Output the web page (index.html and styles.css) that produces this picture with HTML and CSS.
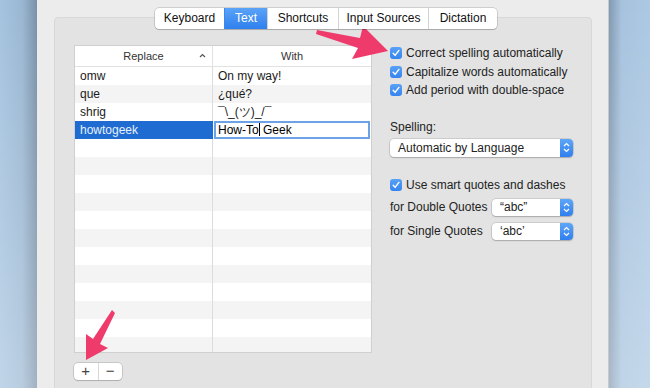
FILE: index.html
```html
<!DOCTYPE html>
<html lang="en">
<head>
    <meta charset="UTF-8">
    <meta name="viewport" content="width=device-width, initial-scale=1.0">
    <title>Keyboard - Text</title>
    <link rel="stylesheet" href="styles.css">
</head>
<body>
    <div class="screen">
        <div class="desk desk-left"></div>

        <div class="window">
            <!-- segmented tabs -->
            <div class="tabs">
                <div class="tab tab-keyboard">Keyboard</div>
                <div class="tab tab-text active">Text</div>
                <div class="tab tab-shortcuts">Shortcuts</div>
                <div class="tab tab-input">Input Sources</div>
                <div class="tab tab-dictation">Dictation</div>
            </div>

            <div class="group">
                <!-- replacement table -->
                <div class="left-col">
                    <div class="table">
                        <div class="thead">
                            <div class="th th-replace">Replace
                                <svg class="caret" width="7" height="5" viewBox="0 0 7 5"><path d="M1 4 L3.5 1.5 L6 4" fill="none" stroke="#555" stroke-width="1.2"/></svg>
                            </div>
                            <div class="th">With</div>
                        </div>
                        <div class="tbody">
                            <div class="row"><div class="cell">omw</div><div class="cell">On my way!</div></div>
                            <div class="row"><div class="cell">que</div><div class="cell">¿qué?</div></div>
                            <div class="row"><div class="cell">shrig</div><div class="cell">¯\_(ツ)_/¯</div></div>
                            <div class="row selected">
                                <div class="cell">howtogeek</div>
                                <div class="cell"><div class="edit">How-To<span class="cursor"></span> Geek</div></div>
                            </div>
                            <div class="row"><div class="cell"></div><div class="cell"></div></div>
                            <div class="row"><div class="cell"></div><div class="cell"></div></div>
                            <div class="row"><div class="cell"></div><div class="cell"></div></div>
                            <div class="row"><div class="cell"></div><div class="cell"></div></div>
                            <div class="row"><div class="cell"></div><div class="cell"></div></div>
                            <div class="row"><div class="cell"></div><div class="cell"></div></div>
                            <div class="row"><div class="cell"></div><div class="cell"></div></div>
                            <div class="row"><div class="cell"></div><div class="cell"></div></div>
                            <div class="row"><div class="cell"></div><div class="cell"></div></div>
                            <div class="row"><div class="cell"></div><div class="cell"></div></div>
                            <div class="row"><div class="cell"></div><div class="cell"></div></div>
                            <div class="row"><div class="cell"></div><div class="cell"></div></div>
                        </div>
                    </div>
                    <div class="addrem">
                        <div class="btn">+</div>
                        <div class="btn">−</div>
                    </div>
                </div>

                <!-- options -->
                <div class="right-col">
                    <div class="check"><span class="box"><svg width="12" height="12" viewBox="0 0 12 12"><path d="M3.2 6.3 L5.1 8.4 L8.9 3.4" fill="none" stroke="#fff" stroke-width="1.4" stroke-linecap="round" stroke-linejoin="round"/></svg></span>Correct spelling automatically</div>
                    <div class="check"><span class="box"><svg width="12" height="12" viewBox="0 0 12 12"><path d="M3.2 6.3 L5.1 8.4 L8.9 3.4" fill="none" stroke="#fff" stroke-width="1.4" stroke-linecap="round" stroke-linejoin="round"/></svg></span>Capitalize words automatically</div>
                    <div class="check"><span class="box"><svg width="12" height="12" viewBox="0 0 12 12"><path d="M3.2 6.3 L5.1 8.4 L8.9 3.4" fill="none" stroke="#fff" stroke-width="1.4" stroke-linecap="round" stroke-linejoin="round"/></svg></span>Add period with double-space</div>

                    <div class="label spelling">Spelling:</div>
                    <div class="popup popup-wide">
                        <span class="popup-text">Automatic by Language</span>
                        <span class="stepper"><svg width="7" height="11" viewBox="0 0 7 11"><path d="M1 4 L3.5 1.5 L6 4 M1 7 L3.5 9.5 L6 7" fill="none" stroke="#fff" stroke-width="1.2"/></svg></span>
                    </div>

                    <div class="check smart"><span class="box"><svg width="12" height="12" viewBox="0 0 12 12"><path d="M3.2 6.3 L5.1 8.4 L8.9 3.4" fill="none" stroke="#fff" stroke-width="1.4" stroke-linecap="round" stroke-linejoin="round"/></svg></span>Use smart quotes and dashes</div>
                    <div class="quote-row first">
                        <span class="quote-label">for Double Quotes</span>
                        <div class="popup popup-small">
                            <span class="popup-text">“abc”</span>
                            <span class="stepper"><svg width="7" height="11" viewBox="0 0 7 11"><path d="M1 4 L3.5 1.5 L6 4 M1 7 L3.5 9.5 L6 7" fill="none" stroke="#fff" stroke-width="1.2"/></svg></span>
                        </div>
                    </div>
                    <div class="quote-row">
                        <span class="quote-label">for Single Quotes</span>
                        <div class="popup popup-small">
                            <span class="popup-text">‘abc’</span>
                            <span class="stepper"><svg width="7" height="11" viewBox="0 0 7 11"><path d="M1 4 L3.5 1.5 L6 4 M1 7 L3.5 9.5 L6 7" fill="none" stroke="#fff" stroke-width="1.2"/></svg></span>
                        </div>
                    </div>
                </div>
            </div>
        </div>

        <div class="desk desk-right"></div>

        <!-- annotation arrows drawn over the screenshot -->
        <svg class="arrows" width="650" height="388" viewBox="0 0 650 388">
            <polygon points="317,30 360,38 363,26 388,51 352,59 358,48 316,34" fill="#ef3a6c"/>
            <polygon points="112,310 115,313 100,344 108,348 86,360 86,334 93,339" fill="#ef3a6c"/>
        </svg>
    </div>
</body>
</html>
```

FILE: styles.css
```css
body {
    margin: 0;
    font-family: 'Liberation Sans', Arial, sans-serif;
    font-size: 12px;
    color: #222;
}
.screen {
    position: relative;
    width: 650px;
    height: 388px;
    overflow: hidden;
    display: flex;
}
.desk {
    height: 100%;
}
.desk-left {
    width: 37px;
    background: linear-gradient(to bottom, rgba(255, 255, 255, 0), rgba(255, 255, 255, 0.3)),
                linear-gradient(to right, #a5c3df, #9ab7d2 60%, #7990a8);
}
.desk-right {
    width: 41px;
    background: linear-gradient(to bottom, rgba(255, 255, 255, 0), rgba(255, 255, 255, 0.3)),
                linear-gradient(to right, #8299b1, #a6c2dd 30%, #acc8e3);
}
.window {
    width: 572px;
    background: #ececec;
    padding: 8px 16px 0 17px;
    box-sizing: border-box;
    border-right: 1px solid #c9c9c9;
}

/* tabs */
.tabs {
    display: flex;
    margin-left: 101px;
    position: relative;
    z-index: 1;
    width: max-content;
    background: #fff;
    border-radius: 4px;
    box-shadow: 0 0 0 0.5px rgba(0, 0, 0, 0.25), 0 1px 1px rgba(0, 0, 0, 0.15);
    overflow: hidden;
}
.tab {
    height: 21px;
    line-height: 21px;
    text-align: center;
    font-size: 12px;
    color: #111;
    border-left: 1px solid #d3d3d3;
}
.tab:first-child {
    border-left: none;
}
.tab-keyboard { width: 69px; }
.tab-text { width: 42px; }
.tab-shortcuts { width: 70px; }
.tab-input { width: 89px; }
.tab-dictation { width: 68px; }
.tab.active {
    background: linear-gradient(#5aa3f8, #2f80ee);
    color: #fff;
    border-left-color: #3d88ec;
}

/* group box */
.group {
    margin-top: -12px;
    height: 400px;
    background: #e3e3e3;
    border: 1px solid #d8d8d8;
    border-radius: 4px;
    padding: 27px 0 0 19px;
    display: flex;
    gap: 18px;
}

/* table */
.table {
    width: 298px;
    height: 308px;
    box-sizing: border-box;
    background: #fff;
    border: 1px solid #d0d0d0;
    overflow: hidden;
}
.thead {
    display: grid;
    grid-template-columns: 138px 158px;
    height: 20px;
    border-bottom: 1px solid #e2e2e2;
}
.th {
    font-size: 11px;
    color: #333;
    text-align: center;
    line-height: 20px;
}
.th-replace {
    position: relative;
    border-right: 1px solid #e2e2e2;
}
.caret {
    position: absolute;
    right: 6px;
    top: 7px;
}
.row {
    display: grid;
    grid-template-columns: 138px 158px;
    height: 18px;
}
.row:nth-child(even) {
    background: #f4f4f4;
}
.cell {
    line-height: 18px;
    padding-left: 5px;
    font-size: 12px;
    color: #1a1a1a;
}
.cell:first-child {
    border-right: 1px solid #dcdcdc;
}
.row.selected .cell:first-child {
    background: #1e6cd2;
    color: #e8f0fb;
    border-right-color: #1e6cd2;
}
.row.selected .cell:last-child {
    padding: 0 1px 0 1px;
    background: #fff;
}
.edit {
    height: 18px;
    box-sizing: border-box;
    border: 2px solid #6ba3e6;
    line-height: 14px;
    padding-left: 2px;
    color: #000;
    font-size: 12px;
}
.cursor {
    display: inline-block;
    width: 1px;
    height: 13px;
    background: #000;
    vertical-align: -2px;
}
.addrem {
    display: flex;
    margin-top: 10px;
    width: 48px;
    height: 17px;
    background: #fff;
    border-radius: 4px;
    box-shadow: 0 0 0 0.5px rgba(0, 0, 0, 0.25), 0 1px 1px rgba(0, 0, 0, 0.12);
}
.btn {
    flex: 1;
    text-align: center;
    line-height: 16px;
    font-size: 15px;
    color: #444;
}
.btn:first-child {
    border-right: 1px solid #d8d8d8;
}

/* options */
.right-col {
    margin-top: -1px;
}
.check {
    display: flex;
    align-items: center;
    height: 18.5px;
    font-size: 12px;
}
.box {
    width: 12px;
    height: 12px;
    border-radius: 3px;
    background: linear-gradient(#59a1f6, #3584ef);
    margin-right: 4px;
    display: flex;
}
.label.spelling {
    margin-top: 18px;
    height: 18px;
    line-height: 18px;
    font-size: 12px;
}
.popup {
    display: flex;
    background: #fff;
    border-radius: 4px;
    box-shadow: 0 0 0 0.5px rgba(0, 0, 0, 0.2), 0 1px 1.5px rgba(0, 0, 0, 0.18);
    overflow: hidden;
}
.popup-wide {
    margin-top: 3px;
    width: 183px;
    height: 18px;
}
.popup-small {
    width: 81px;
    height: 17px;
}
.popup-text {
    flex: 1;
    padding-left: 8px;
    line-height: 18px;
    font-size: 12px;
}
.popup-small .popup-text {
    line-height: 17px;
}
.stepper {
    width: 13px;
    background: linear-gradient(#5ea6f8, #2f7fee);
    display: flex;
    align-items: center;
    justify-content: center;
}
.check.smart {
    margin-top: 19px;
}
.quote-row {
    display: flex;
    align-items: center;
    margin-top: 6px;
    height: 18px;
}
.quote-row.first {
    margin-top: 4px;
}
.quote-label {
    width: 102px;
    font-size: 12px;
}

.arrows {
    position: absolute;
    left: 0;
    top: 0;
    pointer-events: none;
}
```
